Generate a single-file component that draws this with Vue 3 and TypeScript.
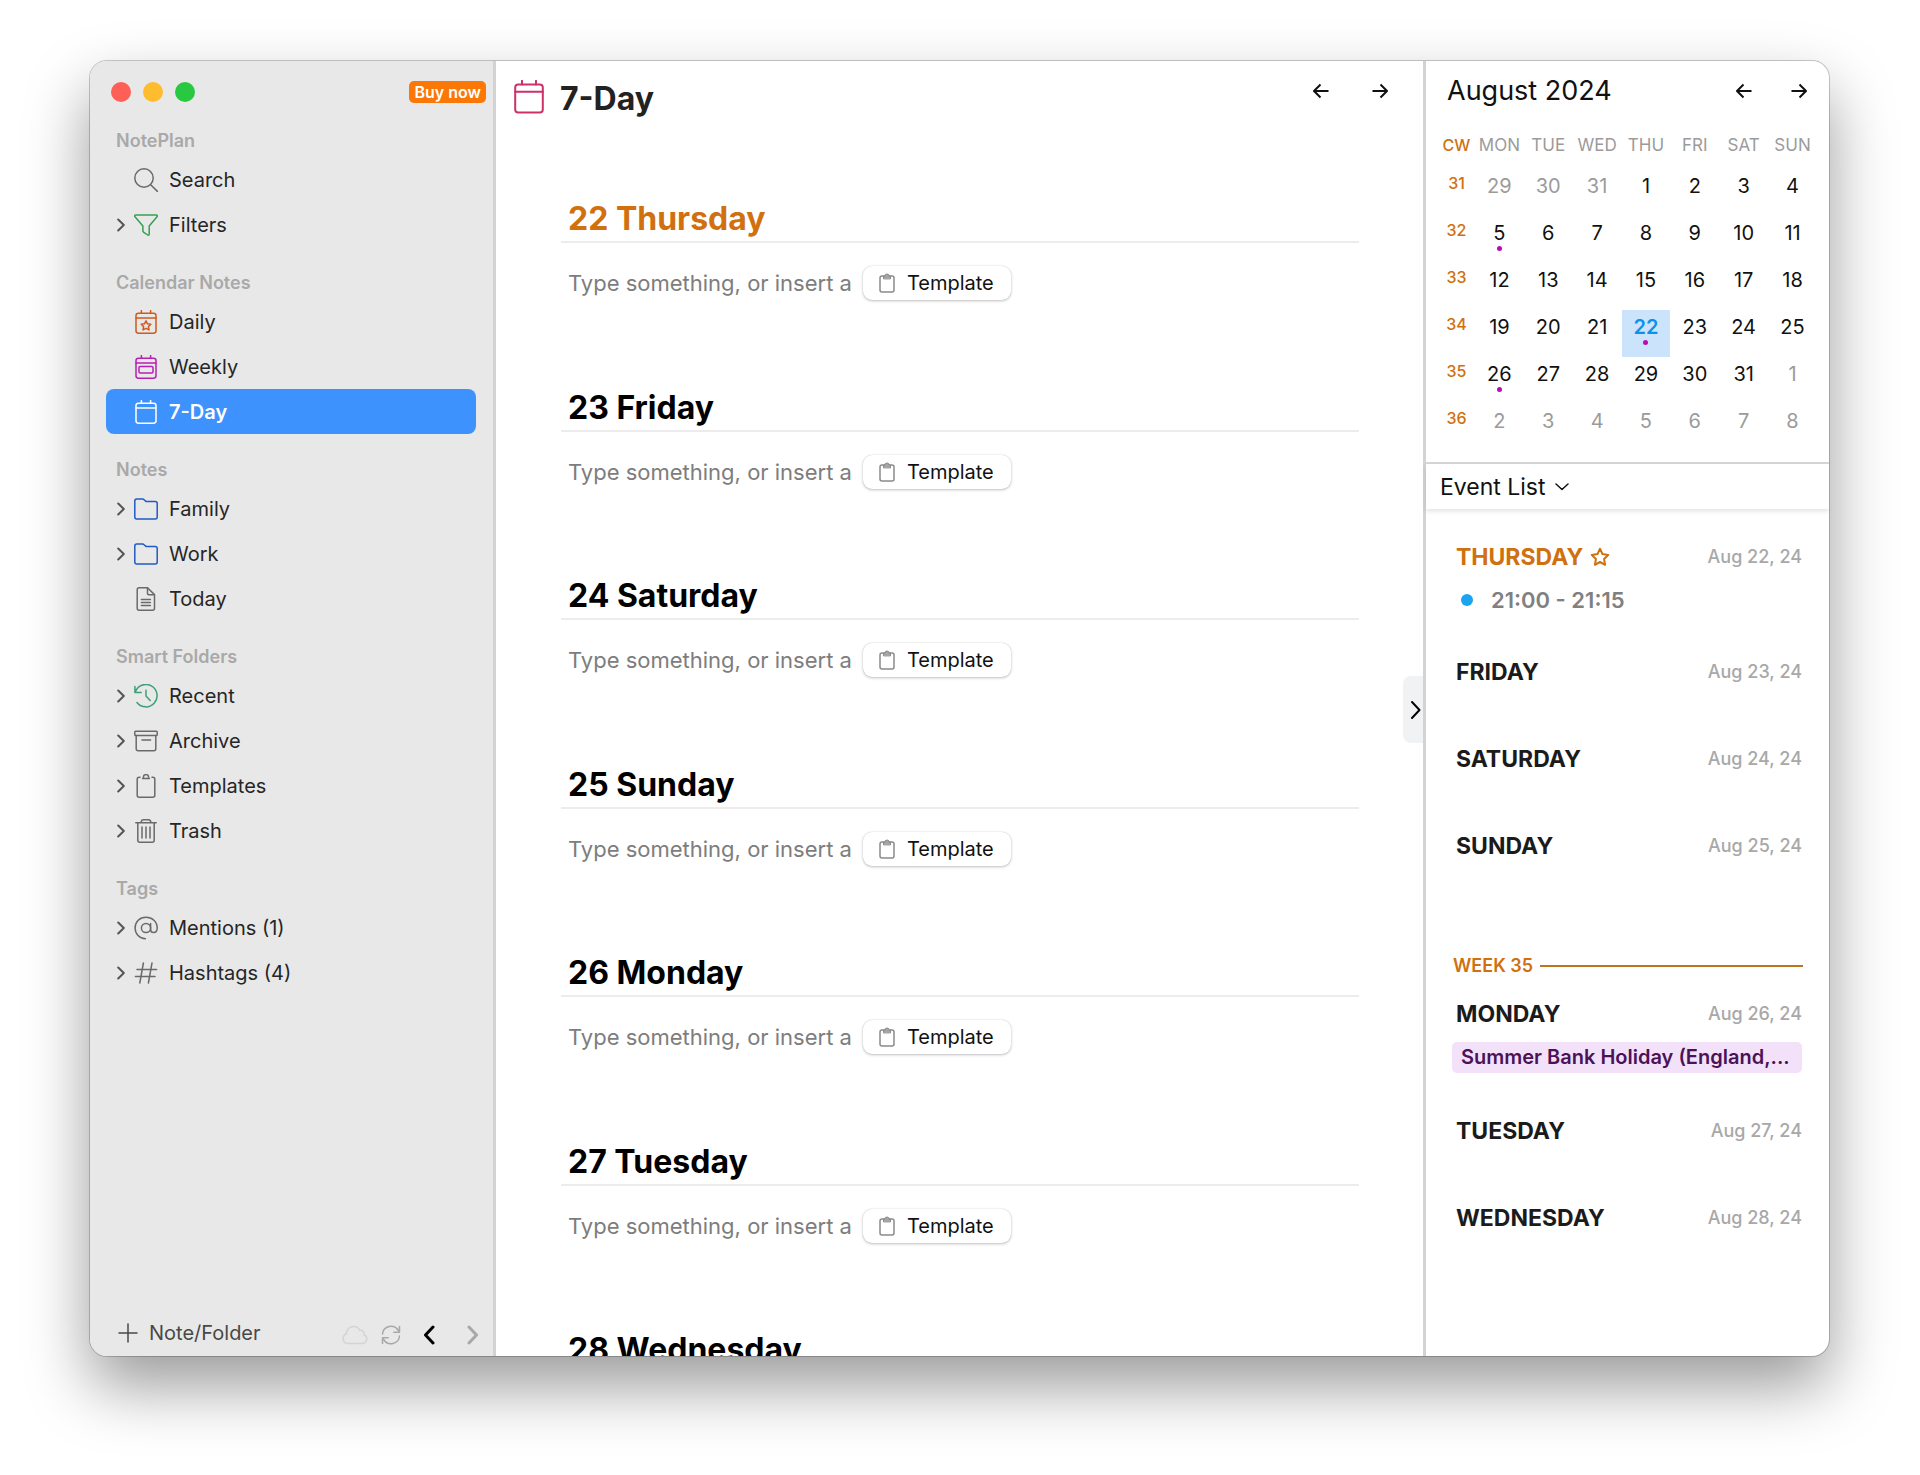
<script setup lang="ts">
import { ref } from 'vue'

interface NavItem {
  label: string
  icon: string
  color: string
  expandable?: boolean
}
interface NavSection {
  title: string
  items: NavItem[]
}
interface AgendaDay {
  name: string
  date: string
  today?: boolean
  week?: string
  time?: string
  allDay?: string
}

const gray = '#6a6a6a'
const sections: NavSection[] = [
  {
    title: 'NotePlan',
    items: [
      { label: 'Search', icon: 'search', color: gray },
      { label: 'Filters', icon: 'filter', color: '#35a04e', expandable: true },
    ],
  },
  {
    title: 'Calendar Notes',
    items: [
      { label: 'Daily', icon: 'daily', color: '#d05a1e' },
      { label: 'Weekly', icon: 'weekly', color: '#b81fb4' },
      { label: '7-Day', icon: 'calendar', color: '#ffffff' },
    ],
  },
  {
    title: 'Notes',
    items: [
      { label: 'Family', icon: 'folder', color: '#1f5bc4', expandable: true },
      { label: 'Work', icon: 'folder', color: '#1f5bc4', expandable: true },
      { label: 'Today', icon: 'note', color: gray },
    ],
  },
  {
    title: 'Smart Folders',
    items: [
      { label: 'Recent', icon: 'recent', color: '#3f9f78', expandable: true },
      { label: 'Archive', icon: 'archive', color: gray, expandable: true },
      { label: 'Templates', icon: 'clipboard', color: gray, expandable: true },
      { label: 'Trash', icon: 'trash', color: gray, expandable: true },
    ],
  },
  {
    title: 'Tags',
    items: [
      { label: 'Mentions (1)', icon: 'at', color: gray, expandable: true },
      { label: 'Hashtags (4)', icon: 'hash', color: gray, expandable: true },
    ],
  },
]

const icons: Record<string, string> = {
  search: '<circle cx="10" cy="10" r="9.2"/><path d="M16.700 16.700 23.400 23.400"/>',
  filter:
    '<path d="M1.600 2h20.800c.9 0 1.200 1 .6 1.700L15.200 13v8.200c0 .9-.9 1.200-1.500.8l-3.900-2.700c-.6-.4-.9-.9-.9-1.600V13L1 3.700C.4 3 .7 2 1.600 2z"/>',
  daily:
    '<rect x="2" y="3.200" width="20" height="20" rx="2.400"/><path d="M2 8h20M7.400.6v2.600M16.600.6v2.600"/><path d="m12 10.800 1.500 3 3.300.5-2.400 2.300.6 3.300-3-1.600-3 1.600.6-3.300-2.400-2.300 3.300-.5z"/>',
  weekly:
    '<rect x="2" y="3.200" width="20" height="20" rx="2.400"/><path d="M2 8h20M7.400.6v2.600M16.600.6v2.600"/><rect x="5" y="11.400" width="14" height="6.600" rx="1.200"/>',
  calendar:
    '<rect x="2" y="3.200" width="20" height="20" rx="2.400"/><path d="M2 8h20M7.400.6v2.600M16.600.6v2.600"/>',
  folder:
    '<path d="M2.800 2h5.800c.6 0 1.100.2 1.500.7L12 4.400h9.200c1.100 0 2 .9 2 2V20c0 1.100-.9 2-2 2H2.800c-1.100 0-2-.9-2-2V4c0-1.100.9-2 2-2z"/>',
  note: '<path d="M5.200.8h8.300l7 6.800v13.600c0 1.100-.9 2-2 2H5.200c-1.100 0-2-.9-2-2V2.800c0-1.100.9-2 2-2z"/><path d="M13.500 1v5.400c0 .8.500 1.300 1.300 1.300h5.400M7.400 12.600h9M7.400 15.600h9M7.400 18.600h9"/>',
  recent:
    '<path d="M.9 2.400v6.100h6.300M1.200 8.300A11.200 11.200 0 1 1 3 18.500M12 6.200V12l4.200 4.400"/>',
  archive:
    '<rect x=".8" y="2.200" width="22.400" height="4.400" rx=".8"/><path d="M2.200 6.600v13.200c0 1.100.9 2 2 2h15.600c1.100 0 2-.9 2-2V6.600M8 11h8.600"/>',
  clipboard:
    '<path d="M6 3.200H5.200c-1.100 0-2 .9-2 2v16c0 1.100.9 2 2 2h13.600c1.100 0 2-.9 2-2v-16c0-1.100-.9-2-2-2H18M8.600 4.400h6.800M9.400 4.400V3.200a2.600 2.600 0 0 1 5.200 0v1.200"/>',
  trash:
    '<path d="M1.800 3.800h20.400M3.800 3.800v17.400c0 1.100.9 2 2 2h12.400c1.100 0 2-.9 2-2V3.800M7 3.600c.3-1.800 1-2.800 2.400-2.800h5.200c1.400 0 2.100 1 2.400 2.800M8 8v11M12 8v11M16 8v11"/>',
  at: '<circle cx="12" cy="12" r="4.600"/><path d="M16.600 7.400v6c0 2 1.200 3.100 3 3.100 2.200 0 3.600-1.600 3.600-4.500C23.200 5.600 18.300 1.200 12 1.200S1.100 5.800 1.100 12c0 6 4.400 10.600 10.300 10.800"/>',
  hash: '<path d="M9.400 2 5.800 22M18 2l-3.600 20M3 8.400h19.600M1.400 15.600H21"/>',
}

const selected = ref('7-Day')

const notes = [
  '22 Thursday',
  '23 Friday',
  '24 Saturday',
  '25 Sunday',
  '26 Monday',
  '27 Tuesday',
  '28 Wednesday',
]

const weekdays = ['MON', 'TUE', 'WED', 'THU', 'FRI', 'SAT', 'SUN']
const today = 22
const marked = [5, 22, 26]

// Six week rows; the month starts on the fourth cell of week 31.
const weeks = Array.from({ length: 6 }, (_, w) => ({
  number: 31 + w,
  days: Array.from({ length: 7 }, (_, d) => {
    const n = w * 7 + d - 2
    const outside = n < 1 || n > 31
    return { n: n < 1 ? n + 31 : n > 31 ? n - 31 : n, outside }
  }),
}))

const agenda: AgendaDay[] = [
  { name: 'THURSDAY', date: 'Aug 22, 24', today: true, time: '21:00 - 21:15' },
  { name: 'FRIDAY', date: 'Aug 23, 24' },
  { name: 'SATURDAY', date: 'Aug 24, 24' },
  { name: 'SUNDAY', date: 'Aug 25, 24' },
  { name: 'MONDAY', date: 'Aug 26, 24', week: 'WEEK 35', allDay: 'Summer Bank Holiday (England,...' },
  { name: 'TUESDAY', date: 'Aug 27, 24' },
  { name: 'WEDNESDAY', date: 'Aug 28, 24' },
]
</script>

<template>
  <div class="desktop">
    <div class="window">
      <aside class="sidebar">
        <div class="titlebar">
          <button class="light close" aria-label="Close"></button>
          <button class="light minimize" aria-label="Minimize"></button>
          <button class="light zoom" aria-label="Zoom"></button>
          <button class="buy">Buy now</button>
        </div>

        <nav class="nav">
          <section v-for="section in sections" :key="section.title" class="group">
            <h2 class="group-title">{{ section.title }}</h2>
            <button
              v-for="item in section.items"
              :key="item.label"
              class="item"
              :class="{ selected: item.label === selected }"
              @click="selected = item.label"
            >
              <svg class="disclosure" viewBox="0 0 8 14">
                <path v-if="item.expandable" d="M1.200 1.500 6.800 7l-5.600 5.500" />
              </svg>
              <svg class="icon" viewBox="0 0 24 24" :style="{ color: item.color }" v-html="icons[item.icon]"></svg>
              <span>{{ item.label }}</span>
            </button>
          </section>
        </nav>

        <footer class="footer">
          <button class="add">
            <svg class="plus" viewBox="0 0 20 20"><path d="M10 1v18M1 10h18" /></svg>
            <span>Note/Folder</span>
          </button>
          <div class="tools">
            <button class="tool cloud" aria-label="Cloud">
              <svg width="26" height="20" viewBox="0 0 26 20">
                <path d="M6 18.500a5 5 0 0 1-1.500-9.700C4.500 4.500 7.500 1.500 11.500 1.500c3 0 5.200 1.500 6.300 3.900 3-.3 4.700 1.700 4.200 4.300a4.600 4.600 0 0 1-1.500 8.800z" />
              </svg>
            </button>
            <button class="tool sync" aria-label="Sync">
              <svg width="20" height="20" viewBox="0 0 20 20">
                <path d="M1.500 9a8.500 8.500 0 0 1 15.800-3.500M18.500 1.500v5.700h-5.700M18.500 11a8.500 8.500 0 0 1-15.800 3.500M1.500 18.500v-5.700h5.700" />
              </svg>
            </button>
            <button class="tool back" aria-label="Back">
              <svg width="12" height="20" viewBox="0 0 12 20"><path d="M10 2 2.500 10l7.500 8" /></svg>
            </button>
            <button class="tool forward" aria-label="Forward">
              <svg width="12" height="20" viewBox="0 0 12 20"><path d="m2 2 7.500 8L2 18" /></svg>
            </button>
          </div>
        </footer>
      </aside>

      <main class="main">
        <header class="main-head">
          <svg class="head-icon" viewBox="0 0 30 34">
            <rect x="1.200" y="4.600" width="27.600" height="28" rx="3" />
            <path d="M1.200 11.800h27.600M8 .8v3.800M22 .8v3.800" />
          </svg>
          <h1>7-Day</h1>
          <div class="arrows wide">
            <button aria-label="Previous days">
              <svg viewBox="0 0 16 16"><path d="M15.500 8H1M7.500 1.500 1 8l6.500 6.500" /></svg>
            </button>
            <button aria-label="Next days">
              <svg viewBox="0 0 16 16"><path d="M.5 8H15M8.500 1.500 15 8l-6.500 6.500" /></svg>
            </button>
          </div>
        </header>

        <div class="notes">
          <article v-for="(note, i) in notes" :key="note">
            <h2 class="note-title" :class="{ current: i === 0 }">{{ note }}</h2>
            <div v-if="i < notes.length - 1" class="composer">
              <input type="text" placeholder="Type something, or insert a" :aria-label="note" />
              <button class="template">
                <svg viewBox="0 0 16 20">
                  <rect x="1" y="3" width="14" height="16" rx="2" />
                  <path class="clip" d="M4.500 5.500V3.200h1.300a2.200 2.200 0 0 1 4.400 0h1.300v2.300z" />
                </svg>
                <span>Template</span>
              </button>
            </div>
          </article>
        </div>

        <button class="collapse" aria-label="Hide calendar">
          <svg viewBox="0 0 12 20"><path d="m2 2 7.500 8L2 18" /></svg>
        </button>
      </main>

      <aside class="panel">
        <header class="month">
          <h2>August 2024</h2>
          <div class="arrows">
            <button aria-label="Previous month">
              <svg viewBox="0 0 16 16"><path d="M15.500 8H1M7.500 1.500 1 8l6.500 6.500" /></svg>
            </button>
            <button aria-label="Next month">
              <svg viewBox="0 0 16 16"><path d="M.5 8H15M8.500 1.500 15 8l-6.500 6.500" /></svg>
            </button>
          </div>
        </header>

        <div class="calendar">
          <table>
            <thead>
              <tr>
                <th class="cw" scope="col">CW</th>
                <th v-for="day in weekdays" :key="day" scope="col">{{ day }}</th>
              </tr>
            </thead>
            <tbody>
              <tr v-for="week in weeks" :key="week.number">
                <th class="cw" scope="row">{{ week.number }}</th>
                <td
                  v-for="day in week.days"
                  :key="day.n"
                  :class="{
                    outside: day.outside,
                    today: !day.outside && day.n === today,
                    marked: !day.outside && marked.includes(day.n),
                  }"
                >
                  {{ day.n }}
                </td>
              </tr>
            </tbody>
          </table>
        </div>

        <div class="view-bar">
          <select aria-label="View">
            <option>Event List</option>
          </select>
          <svg viewBox="0 0 14 8"><path d="m1 1 6 5.500L13 1" /></svg>
        </div>

        <div class="agenda">
          <section v-for="day in agenda" :key="day.name" class="day" :class="{ busy: day.time || day.allDay }">
            <div v-if="day.week" class="week"><span>{{ day.week }}</span></div>
            <div class="day-head">
              <h3 :class="{ current: day.today }">{{ day.name }}</h3>
              <svg v-if="day.today" class="star" viewBox="0 0 20 20">
                <path d="m10 1.800 2.500 5.300 5.800.8-4.200 4.100 1 5.800-5.100-2.800-5.100 2.800 1-5.800-4.200-4.100 5.800-.8z" />
              </svg>
              <time>{{ day.date }}</time>
            </div>
            <p v-if="day.time" class="timed">{{ day.time }}</p>
            <p v-if="day.allDay" class="all-day">{{ day.allDay }}</p>
          </section>
        </div>
      </aside>
    </div>
  </div>
</template>

<style>
body {
  margin: 0;
  background: #fff;
}
</style>

<style scoped>
* {
  box-sizing: border-box;
}
h1,
h2,
h3,
p {
  margin: 0;
}
button,
input,
select {
  margin: 0;
  padding: 0;
  border: 0;
  background: none;
  font: inherit;
  color: inherit;
}
svg {
  display: block;
  flex: none;
  fill: none;
  stroke: currentColor;
  stroke-width: 1.5;
  stroke-linecap: round;
  stroke-linejoin: round;
}
.desktop {
  height: 100vh;
  padding: 61px 91px 119px 90px;
  font-family: Inter, 'Liberation Sans', sans-serif;
  font-size: 20px;
  color: #262626;
  overflow: hidden;
}
.window {
  height: 100%;
  display: grid;
  grid-template-columns: 406px minmax(0, 1fr) 406px;
  border-radius: 17px;
  overflow: hidden;
  background: #fff;
  box-shadow:
    0 0 0 1px rgba(0, 0, 0, 0.2),
    0 30px 64px rgba(0, 0, 0, 0.4);
}

/* Sidebar */
.sidebar {
  display: flex;
  flex-direction: column;
  min-height: 0;
  background: #e8e8e8;
  border-right: 3px solid #d3d3d3;
}
.titlebar {
  flex: none;
  height: 62px;
  display: flex;
  align-items: center;
  gap: 12px;
  padding: 0 7px 0 21px;
}
.light {
  width: 20px;
  height: 20px;
  border-radius: 50%;
}
.close {
  background: #fe5f57;
}
.minimize {
  background: #febc2e;
}
.zoom {
  background: #28c840;
}
.buy {
  margin-left: auto;
  height: 22px;
  padding: 0 5px;
  border-radius: 5px;
  background: #fb7706;
  color: #fff;
  font-size: 16px;
  line-height: 20px;
  font-weight: 600;
}
.nav {
  flex: 1;
  display: flex;
  flex-direction: column;
  gap: 19px;
  padding: 1px 17px 0 16px;
}
.group-title {
  padding-left: 10px;
  font-size: 18px;
  line-height: 33px;
  font-weight: 600;
  color: #a9a9a9;
}
.item {
  width: 100%;
  height: 45px;
  padding-left: 11px;
  display: flex;
  align-items: center;
  border-radius: 8px;
  text-align: left;
}
.item.selected {
  background: #3e92fe;
  color: #fff;
  font-weight: 600;
}
.disclosure {
  width: 8px;
  height: 14px;
  margin-right: 9px;
  color: #555;
  stroke-width: 2;
}
.icon {
  width: 24px;
  height: 24px;
  margin-right: 11px;
}
.footer {
  flex: none;
  height: 48px;
  display: flex;
  align-items: center;
  justify-content: space-between;
  padding: 1px 14px 0 28px;
  color: #484848;
}
.add {
  display: flex;
  align-items: center;
  gap: 11px;
}
.plus {
  width: 20px;
  height: 20px;
}
.tools {
  display: flex;
  align-items: center;
  padding-top: 4px;
}
.cloud {
  color: #d4d4d4;
  margin-right: 13px;
}
.sync {
  color: #a8a8a8;
  margin-right: 22px;
}
.back {
  color: #000;
  margin-right: 32px;
}
.forward {
  color: #a8a8a8;
}
.back svg,
.forward svg {
  stroke-width: 3;
}

/* Notes */
.main {
  position: relative;
  min-height: 0;
  overflow: hidden;
}
.main-head {
  height: 137px;
  display: flex;
  align-items: flex-start;
  padding: 18px 35px 0 18px;
}
.head-icon {
  width: 30px;
  height: 34px;
  margin-top: 1px;
  margin-right: 16px;
  color: #cc3169;
  stroke-width: 2;
}
h1 {
  font-size: 32px;
  line-height: 40px;
  font-weight: 700;
  color: #222;
}
.arrows {
  margin-left: auto;
  display: flex;
  gap: 39px;
  color: #111;
}
.arrows.wide {
  gap: 43px;
  padding-top: 4px;
}
.arrows svg {
  width: 16px;
  height: 16px;
  stroke-width: 2;
  stroke-linecap: butt;
}
.notes {
  height: 1320px;
  display: grid;
  grid-template-rows: repeat(7, 1fr);
  padding: 0 64px 0 65px;
}
.note-title {
  padding: 1px 7px 2px;
  border-bottom: 2px solid #ececec;
  font-size: 32px;
  line-height: 40px;
  font-weight: 700;
  color: #000;
}
.note-title.current,
h3.current {
  color: #d0700f;
}
.composer {
  margin-top: 23px;
  padding-left: 7px;
  display: flex;
  align-items: center;
  gap: 11px;
}
.composer input {
  field-sizing: content;
  height: 34px;
  font-size: 22px;
}
.composer input::placeholder {
  color: #7d7d7d;
  opacity: 1;
}
.template {
  height: 34px;
  padding: 0 17px 0 16px;
  display: flex;
  align-items: center;
  gap: 12px;
  border-radius: 9px;
  background: #fff;
  box-shadow:
    0 0 1px rgba(0, 0, 0, 0.2),
    0 1px 3px rgba(0, 0, 0, 0.24);
  color: #111;
}
.template svg {
  width: 16px;
  height: 20px;
  color: #8a8a8a;
}
.template .clip {
  fill: #a5a5a5;
  stroke-width: 1;
}
.collapse {
  position: absolute;
  right: 0;
  top: calc(50% - 33px);
  width: 20px;
  height: 67px;
  padding-top: 2px;
  border-radius: 8px 0 0 8px;
  background: #f1f2f3;
  color: #000;
}
.collapse svg {
  width: 12px;
  height: 20px;
  margin-left: 7px;
  stroke-width: 2;
}

/* Calendar */
.panel {
  display: flex;
  flex-direction: column;
  min-height: 0;
  border-left: 3px solid #d3d3d3;
}
.month {
  flex: none;
  height: 60px;
  display: flex;
  align-items: center;
  padding: 0 22px 0 21px;
}
.month h2 {
  font-size: 27px;
  line-height: 32px;
  font-weight: 400;
  color: #111;
}
.calendar {
  padding: 0 12px 11px;
  border-bottom: 2px solid #d8d8d8;
}
table {
  width: 100%;
  table-layout: fixed;
  border-collapse: collapse;
  text-align: center;
}
th,
td {
  height: 47px;
  padding: 0;
}
thead th {
  height: 48px;
  font-size: 17px;
  line-height: 20px;
  font-weight: 400;
  color: #9b9b9b;
}
th.cw {
  width: 37px;
  font-size: 16px;
  font-weight: 500;
  color: #d0700f;
}
tbody th {
  padding-top: 4px;
  vertical-align: top;
  line-height: 20px;
}
td {
  position: relative;
  padding-top: 7px;
  vertical-align: top;
  line-height: 20px;
  color: #111;
}
td.outside {
  color: #9b9b9b;
}
td.today {
  background: #cce4fb;
  color: #0a93ea;
  font-weight: 600;
}
td.marked::after {
  content: '';
  display: block;
  width: 5px;
  height: 5px;
  margin: 3px auto 0;
  border-radius: 50%;
  background: #b90bb5;
}

/* Event list */
.view-bar {
  flex: none;
  height: 45px;
  display: flex;
  align-items: center;
  gap: 9px;
  padding: 1px 0 0 14px;
  box-shadow: 0 2px 5px rgba(0, 0, 0, 0.12);
  color: #111;
}
.view-bar select {
  appearance: none;
  font-size: 23px;
}
.view-bar svg {
  width: 14px;
  height: 8px;
}
.agenda {
  padding: 33px 27px 0 30px;
}
.day {
  padding-bottom: 57px;
}
.day.busy {
  padding-bottom: 42px;
}
.day-head {
  height: 30px;
  display: flex;
  align-items: center;
}
h3 {
  font-size: 23px;
  line-height: 30px;
  font-weight: 700;
  color: #1b1b1b;
}
.star {
  width: 20px;
  height: 20px;
  margin-left: 7px;
  color: #d0700f;
  stroke-width: 2;
}
time {
  margin-left: auto;
  font-size: 18px;
  line-height: 28px;
  font-weight: 500;
  color: #a8a8a8;
}
.timed {
  margin-top: 13px;
  display: flex;
  align-items: center;
  gap: 18px;
  padding-left: 5px;
  font-size: 22px;
  line-height: 30px;
  font-weight: 600;
  color: #808080;
}
.timed::before {
  content: '';
  width: 12px;
  height: 12px;
  border-radius: 50%;
  background: #1ca4f0;
}
.all-day {
  margin: 13px 0 1px -4px;
  padding: 0 9px;
  border-radius: 5px;
  background: #f2e1f9;
  line-height: 31px;
  font-weight: 600;
  color: #4a1259;
  white-space: nowrap;
}
.week {
  margin: 33px -1px 18px -3px;
  display: flex;
  align-items: center;
  gap: 7px;
  font-size: 18px;
  line-height: 30px;
  font-weight: 600;
  color: #d0700f;
}
.week::after {
  content: '';
  flex: 1;
  height: 2px;
  background: #bf7420;
}
</style>
